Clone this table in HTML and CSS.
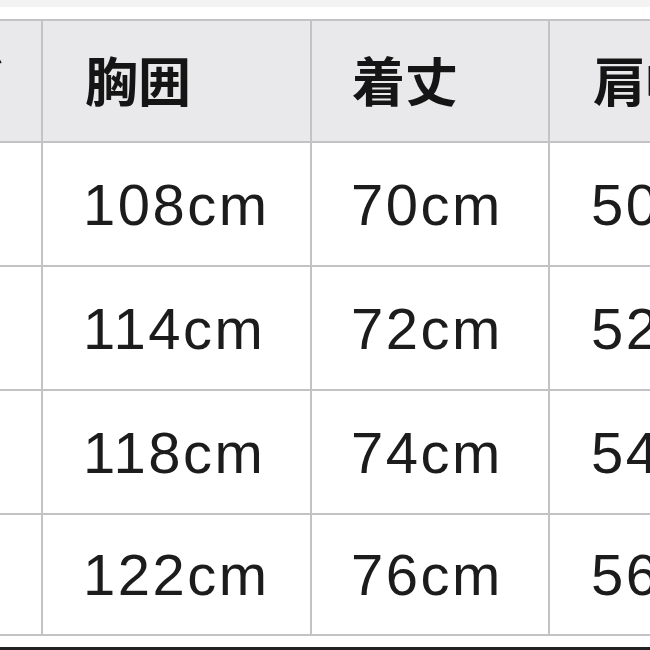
FILE: index.html
```html
<!DOCTYPE html>
<html lang="ja">
<head>
<meta charset="utf-8">
<link rel="stylesheet" href="styles.css">
</head>
<body>
<div class="topband"></div>
<div class="sheet">
  <div class="grid">
    <div class="cell head first"><span>サイズ</span></div>
    <div class="cell head c2">胸囲</div>
    <div class="cell head c3">着丈</div>
    <div class="cell head c4">肩幅</div>

    <div class="cell first"></div>
    <div class="cell num c2">108cm</div>
    <div class="cell num c3">70cm</div>
    <div class="cell num c4">50cm</div>

    <div class="cell first"></div>
    <div class="cell num c2">114cm</div>
    <div class="cell num c3">72cm</div>
    <div class="cell num c4">52cm</div>

    <div class="cell first"></div>
    <div class="cell num c2">118cm</div>
    <div class="cell num c3">74cm</div>
    <div class="cell num c4">54cm</div>

    <div class="cell first"></div>
    <div class="cell num c2">122cm</div>
    <div class="cell num c3">76cm</div>
    <div class="cell num c4">56cm</div>
  </div>
</div>
<div class="bottomline"></div>
</body>
</html>
```

FILE: styles.css
```css
html, body {
  margin: 0;
  padding: 0;
  width: 650px;
  height: 650px;
  overflow: hidden;
  background: #ffffff;
}

.topband {
  height: 7px;
  background: #f3f3f4;
}

.sheet {
  margin-top: 12px;
  margin-left: -2px;
  width: 700px;
}

.grid {
  display: grid;
  grid-template-columns: 41px 267px 236px 300px;
  grid-template-rows: 120px 122px 122px 122px 119px;
  gap: 2px;
  padding: 2px;
  background: #c3c3c5;
  width: max-content;
}

.cell {
  background: #ffffff;
  display: flex;
  align-items: center;
  color: #1c1c1c;
  white-space: nowrap;
  overflow: hidden;
}

.head {
  background: #e9e9eb;
  font-family: "Noto Sans CJK JP", "Noto Sans CJK SC", sans-serif;
  font-weight: 700;
  font-size: 53px;
  color: #151515;
  padding-bottom: 4px;
  box-sizing: border-box;
}

.num {
  font-family: "Liberation Sans", Arial, sans-serif;
  font-size: 58px;
  letter-spacing: 2.5px;
}

.head.c2 { padding-left: 42px; }
.head.c3 { padding-left: 40px; }
.head.c4 { padding-left: 43px; }

.num.c2 { padding-left: 40px; }
.num.c3 { padding-left: 39px; }
.num.c4 { padding-left: 41px; }

.first {
  padding-right: 38px;
  justify-content: flex-end;
}

.first span {
  flex-shrink: 0;
}

.bottomline {
  margin-top: 11px;
  height: 3px;
  background: #222222;
}
```
